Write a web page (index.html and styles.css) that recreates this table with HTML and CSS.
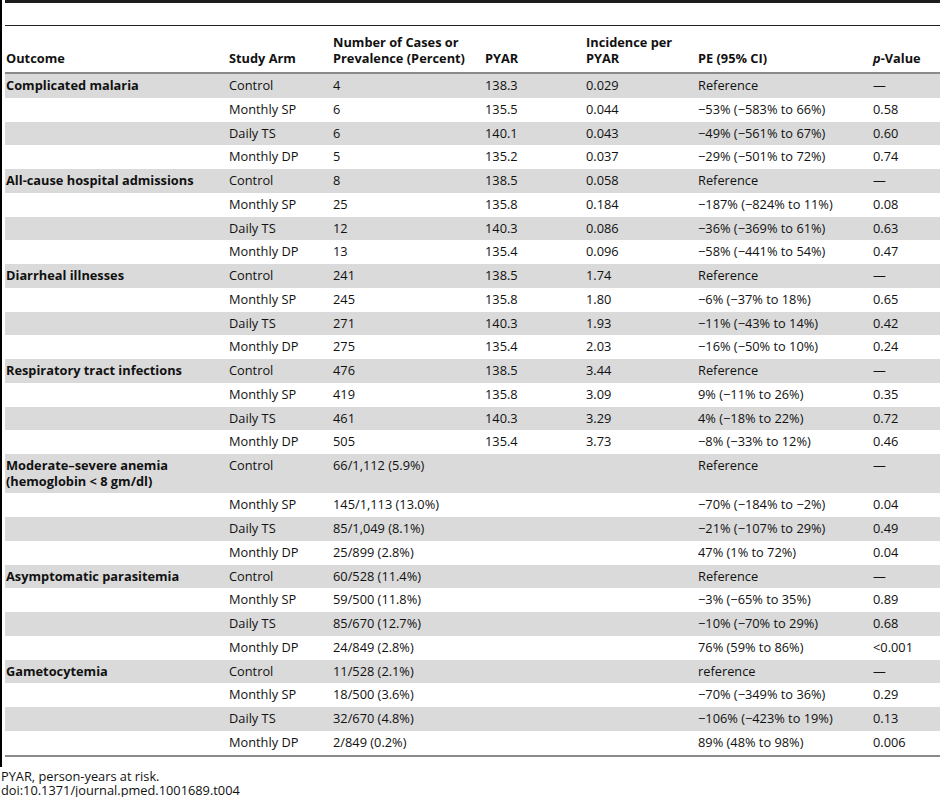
FILE: index.html
```html
<!DOCTYPE html>
<html lang="en">
<head>
    <meta charset="UTF-8">
    <title>Table 4 - Secondary outcomes</title>
    <link rel="stylesheet" href="styles.css">
</head>
<body>
    <div class="frame">
        <div class="caption-space"></div>
        <table class="results">
            <colgroup>
                <col class="c-outcome">
                <col class="c-arm">
                <col class="c-cases">
                <col class="c-pyar">
                <col class="c-inc">
                <col class="c-pe">
                <col class="c-p">
            </colgroup>
            <thead>
                <tr>
                    <th>Outcome</th>
                    <th>Study Arm</th>
                    <th>Number of Cases or Prevalence (Percent)</th>
                    <th>PYAR</th>
                    <th>Incidence per PYAR</th>
                    <th>PE (95% CI)</th>
                    <th><em>p</em>-Value</th>
                </tr>
            </thead>
            <tbody>
                <tr><td class="outcome">Complicated malaria</td><td>Control</td><td>4</td><td>138.3</td><td>0.029</td><td>Reference</td><td>—</td></tr>
                <tr><td></td><td>Monthly SP</td><td>6</td><td>135.5</td><td>0.044</td><td>−53% (−583% to 66%)</td><td>0.58</td></tr>
                <tr><td></td><td>Daily TS</td><td>6</td><td>140.1</td><td>0.043</td><td>−49% (−561% to 67%)</td><td>0.60</td></tr>
                <tr><td></td><td>Monthly DP</td><td>5</td><td>135.2</td><td>0.037</td><td>−29% (−501% to 72%)</td><td>0.74</td></tr>

                <tr><td class="outcome">All-cause hospital admissions</td><td>Control</td><td>8</td><td>138.5</td><td>0.058</td><td>Reference</td><td>—</td></tr>
                <tr><td></td><td>Monthly SP</td><td>25</td><td>135.8</td><td>0.184</td><td>−187% (−824% to 11%)</td><td>0.08</td></tr>
                <tr><td></td><td>Daily TS</td><td>12</td><td>140.3</td><td>0.086</td><td>−36% (−369% to 61%)</td><td>0.63</td></tr>
                <tr><td></td><td>Monthly DP</td><td>13</td><td>135.4</td><td>0.096</td><td>−58% (−441% to 54%)</td><td>0.47</td></tr>

                <tr><td class="outcome">Diarrheal illnesses</td><td>Control</td><td>241</td><td>138.5</td><td>1.74</td><td>Reference</td><td>—</td></tr>
                <tr><td></td><td>Monthly SP</td><td>245</td><td>135.8</td><td>1.80</td><td>−6% (−37% to 18%)</td><td>0.65</td></tr>
                <tr><td></td><td>Daily TS</td><td>271</td><td>140.3</td><td>1.93</td><td>−11% (−43% to 14%)</td><td>0.42</td></tr>
                <tr><td></td><td>Monthly DP</td><td>275</td><td>135.4</td><td>2.03</td><td>−16% (−50% to 10%)</td><td>0.24</td></tr>

                <tr><td class="outcome">Respiratory tract infections</td><td>Control</td><td>476</td><td>138.5</td><td>3.44</td><td>Reference</td><td>—</td></tr>
                <tr><td></td><td>Monthly SP</td><td>419</td><td>135.8</td><td>3.09</td><td>9% (−11% to 26%)</td><td>0.35</td></tr>
                <tr><td></td><td>Daily TS</td><td>461</td><td>140.3</td><td>3.29</td><td>4% (−18% to 22%)</td><td>0.72</td></tr>
                <tr><td></td><td>Monthly DP</td><td>505</td><td>135.4</td><td>3.73</td><td>−8% (−33% to 12%)</td><td>0.46</td></tr>

                <tr><td class="outcome wrap">Moderate–severe anemia (hemoglobin &lt; 8 gm/dl)</td><td>Control</td><td>66/1,112 (5.9%)</td><td></td><td></td><td>Reference</td><td>—</td></tr>
                <tr><td></td><td>Monthly SP</td><td>145/1,113 (13.0%)</td><td></td><td></td><td>−70% (−184% to −2%)</td><td>0.04</td></tr>
                <tr><td></td><td>Daily TS</td><td>85/1,049 (8.1%)</td><td></td><td></td><td>−21% (−107% to 29%)</td><td>0.49</td></tr>
                <tr><td></td><td>Monthly DP</td><td>25/899 (2.8%)</td><td></td><td></td><td>47% (1% to 72%)</td><td>0.04</td></tr>

                <tr><td class="outcome">Asymptomatic parasitemia</td><td>Control</td><td>60/528 (11.4%)</td><td></td><td></td><td>Reference</td><td>—</td></tr>
                <tr><td></td><td>Monthly SP</td><td>59/500 (11.8%)</td><td></td><td></td><td>−3% (−65% to 35%)</td><td>0.89</td></tr>
                <tr><td></td><td>Daily TS</td><td>85/670 (12.7%)</td><td></td><td></td><td>−10% (−70% to 29%)</td><td>0.68</td></tr>
                <tr><td></td><td>Monthly DP</td><td>24/849 (2.8%)</td><td></td><td></td><td>76% (59% to 86%)</td><td>&lt;0.001</td></tr>

                <tr><td class="outcome">Gametocytemia</td><td>Control</td><td>11/528 (2.1%)</td><td></td><td></td><td>reference</td><td>—</td></tr>
                <tr><td></td><td>Monthly SP</td><td>18/500 (3.6%)</td><td></td><td></td><td>−70% (−349% to 36%)</td><td>0.29</td></tr>
                <tr><td></td><td>Daily TS</td><td>32/670 (4.8%)</td><td></td><td></td><td>−106% (−423% to 19%)</td><td>0.13</td></tr>
                <tr><td></td><td>Monthly DP</td><td>2/849 (0.2%)</td><td></td><td></td><td>89% (48% to 98%)</td><td>0.006</td></tr>
            </tbody>
        </table>
    </div>
    <p class="footnote">PYAR, person-years at risk.
doi:10.1371/journal.pmed.1001689.t004</p>
</body>
</html>
```

FILE: styles.css
```css
* {
    margin: 0;
    padding: 0;
    box-sizing: border-box;
}

body {
    background: #fff;
    color: #111;
    font-family: 'Open Sans', 'DejaVu Sans', sans-serif;
    font-size: 12.8px;
}

/* black rule on the left side of the figure */
.frame {
    border-left: 2px solid #000;
    padding-left: 3px;
    padding-bottom: 10px;
}

.caption-space {
    height: 25px;
    border-top: 3px solid #1c1c1c;
}

.results {
    width: 100%;
    border-collapse: collapse;
    table-layout: fixed;
    border-top: 1px solid #222;
    border-bottom: 2px solid #8a8a8a;
}

.c-outcome { width: 223px; }
.c-arm { width: 104px; }
.c-cases { width: 152px; }
.c-pyar { width: 101px; }
.c-inc { width: 112px; }
.c-pe { width: 175px; }
.c-p { width: 68px; }

.results th {
    text-align: left;
    vertical-align: bottom;
    font-weight: bold;
    line-height: 15.5px;
    padding: 9px 4px 6px 1px;
    border-bottom: 2px solid #8a8a8a;
}

.results td {
    vertical-align: top;
    line-height: 15.5px;
    padding: 4.125px 4px 4.125px 1px;
    white-space: nowrap;
}

.results tbody tr:nth-child(odd) {
    background: #dadada;
}

.results td.outcome {
    font-weight: bold;
}

.results td.wrap {
    white-space: normal;
}

.footnote {
    padding: 2px 0 0 1px;
    line-height: 14px;
    white-space: pre-line;
}
```
